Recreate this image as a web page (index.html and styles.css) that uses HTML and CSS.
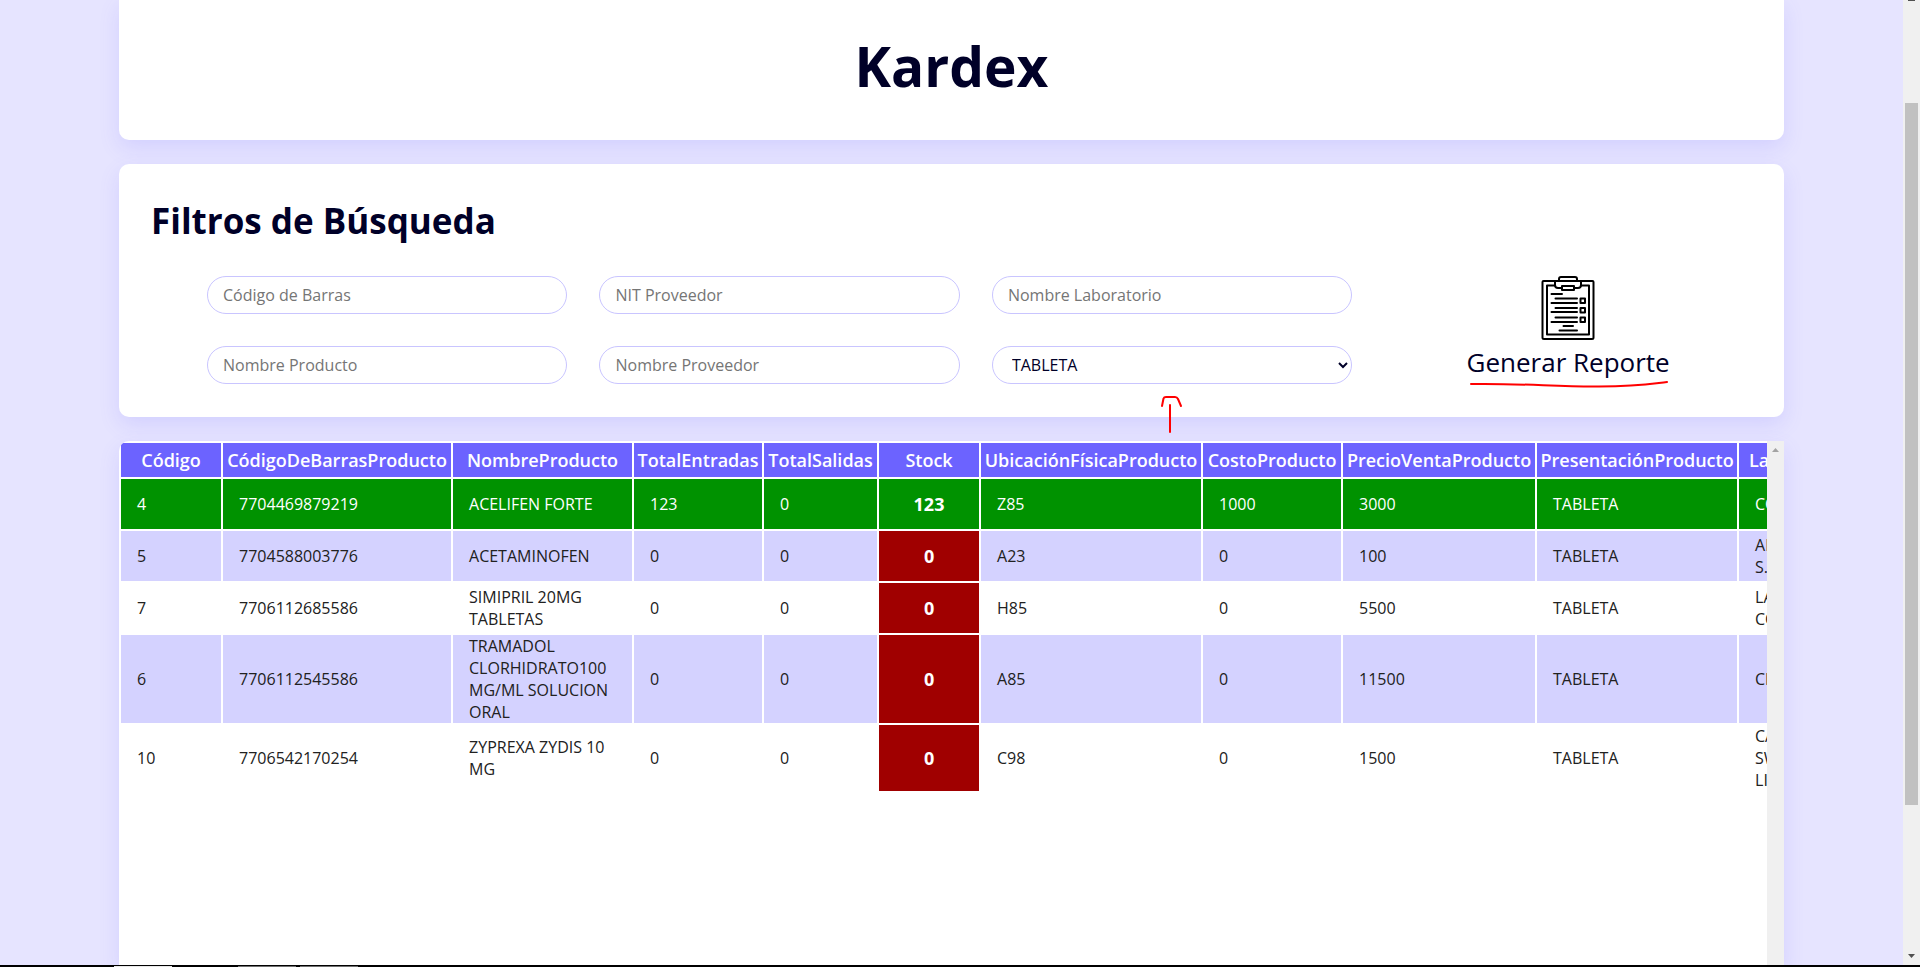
FILE: index.html
```html
<!DOCTYPE html>
<html lang="es">
<head>
<meta charset="utf-8">
<title>Kardex</title>
<link rel="stylesheet" href="styles.css">
</head>
<body>
<div class="viewport">
  <main class="page">
    <header class="card page-header">
      <h1 class="page-title">Kardex</h1>
    </header>

    <section class="card filters">
      <h2 class="filters-title">Filtros de Búsqueda</h2>
      <form class="filters-form">
        <input class="field" type="text" aria-label="Código de Barras" placeholder="Código de Barras">
        <input class="field" type="text" aria-label="NIT Proveedor" placeholder="NIT Proveedor">
        <input class="field" type="text" aria-label="Nombre Laboratorio" placeholder="Nombre Laboratorio">
        <button class="report" type="button">
          <svg class="report-icon" viewBox="0 0 64 64" fill="none" stroke="#000" stroke-width="2" stroke-linecap="round" stroke-linejoin="round" aria-hidden="true">
            <path d="M19 5H7.500Q6.500 5 6.500 6V61.500Q6.500 63 8 63H56Q57.500 63 57.500 61.500V6Q57.500 5 56.500 5H45"/>
            <path d="M19 9.500H11V58.500H53V9.500H45"/>
            <path d="M23 5V3Q23 1 25 1H39Q41 1 41 3V5M19 5H45V9Q45 12 42 12H38M26 12H22Q19 12 19 9V5"/>
            <path d="M26 10H38V14H26Z"/>
            <path d="M15.500 18H26M19.500 22.500H41M15.500 27H41M19.500 32H41M15.500 36H41M19.500 41.500H41M15.500 46H41M27.500 50H37M23.500 54.500H41"/>
            <path d="M44.500 22.500H49V27H44.500ZM44.500 32H49V36.500H44.500ZM44.500 41.500H49V46H44.500Z"/>
          </svg>
          <span class="report-label">Generar Reporte
            <svg class="underline-mark" viewBox="0 0 200 8" fill="none" stroke="#f00" stroke-width="2" stroke-linecap="round" aria-hidden="true"><path d="M2 3C50 2 90 6 130 5.500S180 3 198 1"/></svg>
          </span>
        </button>
        <input class="field" type="text" aria-label="Nombre Producto" placeholder="Nombre Producto">
        <input class="field" type="text" aria-label="Nombre Proveedor" placeholder="Nombre Proveedor">
        <div class="select-wrap">
          <select class="field field-select" aria-label="Presentación"><option>TABLETA</option></select>
          <svg class="arrow-mark" viewBox="0 0 24 40" fill="none" stroke="#f00" stroke-width="2" stroke-linecap="round" stroke-linejoin="round" aria-hidden="true"><path d="M2 12L3.500 4.500Q4 3 6 3H15Q17 3 18 5L21 12M10 11V38"/></svg>
        </div>
      </form>
    </section>

    <section class="card results">
      <div class="table-area">
        <table class="kardex">
          <colgroup>
            <col class="c-small"><col class="c-barcode"><col class="c-name"><col class="c-in"><col class="c-out"><col class="c-small"><col class="c-place"><col class="c-cost"><col class="c-price"><col class="c-form"><col class="c-lab">
          </colgroup>
          <thead>
            <tr><th>Código</th><th>CódigoDeBarrasProducto</th><th>NombreProducto</th><th>TotalEntradas</th><th>TotalSalidas</th><th>Stock</th><th>UbicaciónFísicaProducto</th><th>CostoProducto</th><th>PrecioVentaProducto</th><th>PresentaciónProducto</th><th>LaboratorioProducto</th></tr>
          </thead>
          <tbody>
            <tr class="selected"><td>4</td><td>7704469879219</td><td>ACELIFEN FORTE</td><td>123</td><td>0</td><td class="stock">123</td><td>Z85</td><td>1000</td><td>3000</td><td>TABLETA</td><td>COASPHARMA</td></tr>
            <tr><td>5</td><td>7704588003776</td><td>ACETAMINOFEN</td><td>0</td><td>0</td><td class="stock empty">0</td><td>A23</td><td>0</td><td>100</td><td>TABLETA</td><td>AMERICAN<br>S.A.S</td></tr>
            <tr><td>7</td><td>7706112685586</td><td>SIMIPRIL 20MG TABLETAS</td><td>0</td><td>0</td><td class="stock empty">0</td><td>H85</td><td>0</td><td>5500</td><td>TABLETA</td><td>LABORATORIO<br>COLOMBIA</td></tr>
            <tr><td>6</td><td>7706112545586</td><td>TRAMADOL CLORHIDRATO100 MG/ML SOLUCION ORAL</td><td>0</td><td>0</td><td class="stock empty">0</td><td>A85</td><td>0</td><td>11500</td><td>TABLETA</td><td>CHALVER</td></tr>
            <tr><td>10</td><td>7706542170254</td><td>ZYPREXA ZYDIS 10 MG</td><td>0</td><td>0</td><td class="stock empty">0</td><td>C98</td><td>0</td><td>1500</td><td>TABLETA</td><td>CATALENT<br>SWINDON<br>LIMITED</td></tr>
          </tbody>
        </table>
      </div>
      <div class="scroll-track">
        <svg class="scroll-arrow" viewBox="0 0 17 17" aria-hidden="true"><path fill="#a3a3a3" d="M5 11L8.500 7L12 11Z"/></svg>
      </div>
    </section>
  </main>
  <div class="scroll-track page-scroll">
    <svg class="scroll-arrow-top" viewBox="0 0 17 1" aria-hidden="true"><path fill="#505050" d="M5 0H12V1H5Z"/></svg>
    <div class="scroll-thumb"></div>
    <svg class="scroll-arrow" viewBox="0 0 17 17" aria-hidden="true"><path fill="#505050" d="M5 6L8.500 10L12 6Z"/></svg>
  </div>
</div>
<footer class="taskbar"><span class="task task-active"></span><span class="task task-second"></span><span class="task"></span></footer>
</body>
</html>
```
FILE: styles.css
```css
* {
  box-sizing: border-box;
}

body {
  margin: 0;
  height: 100vh;
  overflow: hidden;
  display: flex;
  flex-direction: column;
  background: #e6e4ff;
  color: #000028;
  font-family: "Open Sans", "Noto Sans", sans-serif;
  font-size: 16px;
  font-weight: 400;
  line-height: 22px;
}

.viewport {
  flex: 1;
  min-height: 0;
  display: flex;
}

.page {
  flex: 1;
  min-width: 0;
  padding: 0 6.2%;
  display: flex;
  flex-direction: column;
  gap: 24px;
  overflow: hidden;
}

.card {
  background: #fff;
  border-radius: 10px;
  box-shadow: 0 8px 20px rgba(108, 99, 255, 0.15);
}

.page-header {
  padding: 28px 32px 36px;
  border-top-left-radius: 0;
  border-top-right-radius: 0;
  text-align: center;
}

.page-title {
  margin: 0;
  font-size: 55px;
  line-height: 76px;
  font-weight: 700;
}

.filters {
  padding: 33px 32px;
}

.filters-title {
  margin: 0 0 31px;
  font-size: 35px;
  line-height: 48px;
  font-weight: 700;
}

.filters-form {
  display: grid;
  grid-template-columns: repeat(3, 1fr) 1.02fr;
  gap: 32px;
  padding-left: 56px;
}

.field {
  width: 100%;
  height: 38px;
  padding: 0 15px;
  border: 1px solid #c9c5ff;
  border-radius: 20px;
  background: #fff;
  color: #000028;
  font: inherit;
}

.field::placeholder {
  color: #757575;
}

.field-select {
  display: block;
  padding-right: 0;
}

.select-wrap {
  position: relative;
}

.arrow-mark {
  position: absolute;
  left: 168px;
  top: 48px;
  width: 24px;
  height: 40px;
}

.report {
  grid-column: 4;
  grid-row: 1 / span 2;
  display: flex;
  flex-direction: column;
  align-items: center;
  padding: 0;
  border: 0;
  background: none;
  color: inherit;
  font: inherit;
}

.report-icon {
  width: 64px;
  height: 64px;
}

.report-label {
  position: relative;
  font-size: 26px;
  line-height: 44px;
}

.underline-mark {
  position: absolute;
  left: 2px;
  top: 41px;
  width: 200px;
  height: 8px;
}

.results {
  flex: 1;
  min-height: 0;
  display: flex;
  overflow: hidden;
  border-radius: 10px 0 0 0;
}

.table-area {
  flex: 1;
  min-width: 0;
  overflow: auto;
  scrollbar-width: none;
}

.kardex {
  table-layout: fixed;
  width: 1824px;
  border-spacing: 2px;
  color: #212121;
}

.c-small { width: 100px; }
.c-barcode { width: 228px; }
.c-name { width: 179px; }
.c-in { width: 128px; }
.c-out { width: 113px; }
.c-place { width: 220px; }
.c-cost { width: 138px; }
.c-price { width: 192px; }
.c-form { width: 200px; }

.kardex th {
  height: 34px;
  padding: 0;
  background: #6c63ff;
  color: #fff;
  font-size: 18px;
  font-weight: 600;
  white-space: nowrap;
}

.kardex td {
  height: 50px;
  padding: 0 16px;
}

.kardex tr:nth-child(even) td {
  background: #d4d2ff;
}

.kardex .selected td {
  background: #009200;
  color: #fff;
  font-weight: 500;
}

.kardex .selected .stock,
.kardex .stock {
  color: #fff;
  font-size: 18px;
  font-weight: 700;
  text-align: center;
}

.kardex tr .stock.empty,
.kardex tr:nth-child(even) .stock.empty {
  background: #a00000;
}

.scroll-track {
  flex: none;
  width: 17px;
  background: #f0f0f0;
}

.scroll-arrow {
  display: block;
  width: 17px;
  height: 17px;
}

.page-scroll {
  display: flex;
  flex-direction: column;
}

.scroll-arrow-top {
  width: 17px;
  height: 1px;
}

.scroll-thumb {
  height: 72.7%;
  margin: 102px 2px auto;
  background: #c1c1c1;
}

.taskbar {
  flex: none;
  display: flex;
  align-items: flex-end;
  gap: 4px;
  height: 2px;
  padding-left: 114px;
  background: #000;
}

.task {
  width: 58px;
  height: 1px;
  background: #707070;
}

.task-active {
  background: #e8e8e8;
}

.task-second {
  margin-left: 62px;
}
```
